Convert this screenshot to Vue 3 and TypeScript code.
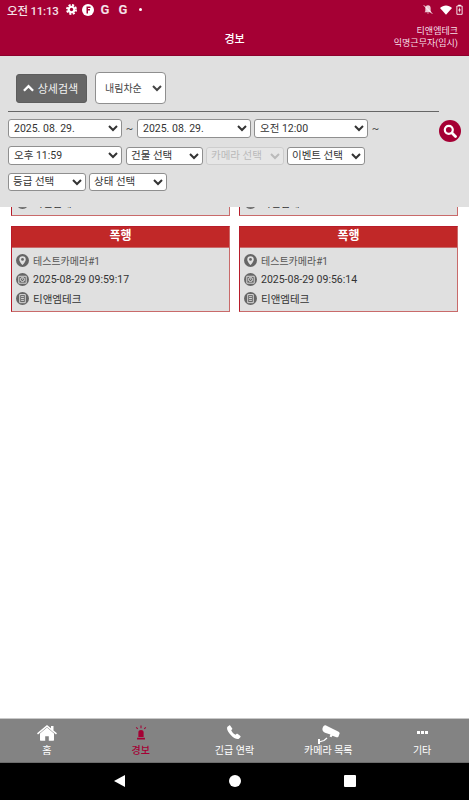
<script setup lang="ts">
interface Card { camera: string; time: string; site: string }
const cards: Card[] = [
  { camera: '테스트카메라#1', time: '2025-08-29 10:00:00', site: '티앤엠테크' },
  { camera: '테스트카메라#1', time: '2025-08-29 09:59:50', site: '티앤엠테크' },
  { camera: '테스트카메라#1', time: '2025-08-29 09:59:17', site: '티앤엠테크' },
  { camera: '테스트카메라#1', time: '2025-08-29 09:56:14', site: '티앤엠테크' },
]
</script>

<template>
  <div class="page">
    <header class="top">
      <div class="status">
        <span class="clock">오전 11:13</span>
        <svg class="gear" viewBox="0 0 12 12" width="11" height="11"><circle cx="6" cy="6" r="4.200" fill="#fff"/><circle cx="6" cy="6" r="5" fill="none" stroke="#fff" stroke-width="2" stroke-dasharray="2.300 1.630"/><circle cx="6" cy="6" r="1.800" fill="#a50034"/></svg>
        <svg class="fi" viewBox="0 0 12 12" width="12" height="12"><circle cx="6" cy="6" r="6" fill="#fff"/><path fill="#a50034" d="M4.500 2.500h4v1.500H6v1h2v1.400H6v3H4.500z"/></svg>
        <span class="g g1">G</span>
        <span class="g g2">G</span>
        <i class="dot"></i>
        <span class="grow"></span>
        <svg class="bell" viewBox="0 0 12 12" width="10" height="11"><path fill="#fff" opacity=".8" d="M6 1c2 0 3.200 1.500 3.200 3.400V8l1 1.200H1.800L2.800 8V4.400C2.800 2.500 4 1 6 1zM5 10h2l-1 1.300z"/><path stroke="#fff" stroke-width="1.200" d="M1 1l10 10"/></svg>
        <svg class="wifi" viewBox="0 0 14 11" width="12" height="10"><path fill="#fff" d="M0 3.300C3.800-.9 10.200-.9 14 3.300L7 11z"/></svg>
        <svg class="batt" viewBox="0 0 8 12" width="7" height="11"><path fill="none" stroke="#fff" d="M1 2h6v9.500H1z"/><path fill="#fff" d="M2.500.5h3V2h-3zM4.500 3L2.500 7h1.300l-.4 3 2.200-4H4.300z"/></svg>
      </div>
      <div class="titlebar">
        <span class="title">경보</span>
        <span class="user">티앤엠테크<br />익명근무자(임시)</span>
      </div>
    </header>

    <main class="main">
      <div class="list">
        <article v-for="c in cards" :key="c.time" class="card">
          <h3 class="card-title">폭행</h3>
          <div class="card-body">
            <div class="row">
              <svg class="ri" viewBox="0 0 14 14"><circle cx="7" cy="7" r="7" fill="#666"/><path fill="#e0e0e0" d="M7 2.300a3.500 3.500 0 0 0-3.500 3.500C3.500 8.300 7 11.800 7 11.800s3.500-3.500 3.500-6A3.500 3.500 0 0 0 7 2.300z"/><circle cx="7" cy="5.800" r="1.500" fill="#666"/></svg>
              <span class="muted">{{ c.camera }}</span>
            </div>
            <div class="row">
              <svg class="ri" viewBox="0 0 14 14"><circle cx="7" cy="7" r="7" fill="#666"/><path fill="none" stroke="#e0e0e0" d="M3 3.500h8v7.500H3z"/><circle cx="7" cy="7" r="2.200" fill="none" stroke="#e0e0e0"/><path stroke="#e0e0e0" d="M7 5.800V7l.9.600"/></svg>
              <span>{{ c.time }}</span>
            </div>
            <div class="row">
              <svg class="ri" viewBox="0 0 14 14"><circle cx="7" cy="7" r="7" fill="#666"/><path fill="none" stroke="#e0e0e0" d="M4 2.800h6v8.700H4z"/><path stroke="#e0e0e0" d="M5.500 5h3M5.500 7h3M5.500 9h3"/></svg>
              <span>{{ c.site }}</span>
            </div>
          </div>
        </article>
      </div>

      <section class="panel">
        <div class="panel-top">
          <button class="detail" type="button">
            <svg viewBox="0 0 12 8" width="11" height="8"><path fill="none" stroke="#fff" stroke-width="2.600" d="M1 7l5-5 5 5"/></svg>
            상세검색
          </button>
          <select class="sort"><option>내림차순</option></select>
        </div>
        <div class="rule"></div>
        <div class="filters">
          <div class="fields">
            <select class="f wide"><option>2025. 08. 29.</option></select>
            <span class="til">~</span>
            <select class="f wide"><option>2025. 08. 29.</option></select>
            <select class="f wide up"><option>오전 12:00</option></select>
            <span class="til">~</span>
            <select class="f wide"><option>오후 11:59</option></select>
            <select class="f narrow first"><option>건물 선택</option></select>
            <select class="f narrow off" disabled><option>카메라 선택</option></select>
            <select class="f narrow"><option>이벤트 선택</option></select>
            <select class="f narrow"><option>등급 선택</option></select>
            <select class="f narrow"><option>상태 선택</option></select>
          </div>
          <button class="search" type="button" aria-label="검색">
            <svg viewBox="0 0 14 14" width="14" height="14"><circle cx="5.800" cy="5.800" r="4" fill="none" stroke="#fff" stroke-width="2.200"/><path stroke="#fff" stroke-width="2.800" stroke-linecap="round" d="M9 9l3.500 3.500"/></svg>
          </button>
        </div>
      </section>
    </main>

    <nav class="nav">
      <div class="tab">
        <div class="ico"><svg viewBox="0 0 20 16" width="20" height="16"><path fill="#fff" d="M10 2.600l7 5.800V15a.7.7 0 0 1-.7.700h-4.500v-4.500H8.200v4.500H3.700A.7.700 0 0 1 3 15V8.400z"/><path fill="#fff" d="M10 0l4 3.300V1h2.500v4.400L20 8.300l-1 1.200-9-7.400-9 7.400-1-1.200z"/></svg></div>
        <span>홈</span>
      </div>
      <div class="tab on">
        <div class="ico"><svg viewBox="0 0 16 17" width="14" height="16"><path fill="#a50034" d="M5 7.500C5 6 6.300 5 8 5s3 1 3 2.500V13H5zM3.500 14h9v2h-9z"/><path stroke="#a50034" stroke-width="1.200" d="M8 0v3M2.500 2l1.800 1.800M13.500 2l-1.800 1.800"/></svg></div>
        <span>경보</span>
      </div>
      <div class="tab">
        <div class="ico"><svg viewBox="0 0 16 16" width="14" height="14"><path fill="#fff" d="M3.600.6L6 3.900c.2.300.2.700-.1 1L4.800 6c.8 2 2.900 4.300 5 5.200l1.200-1.100c.3-.3.700-.3 1-.1l3.300 2.500c.4.300.4.800.1 1.100-.7.900-1.800 2.400-3.100 2.400C7.500 16 0 8.300 0 3.400 0 2.200 1.500 1.200 2.500.5c.4-.2.800-.2 1.100.1z"/></svg></div>
        <span>긴급 연락</span>
      </div>
      <div class="tab">
        <div class="ico cam"><svg viewBox="0 0 23 19" width="23" height="19"><path fill="#fff" d="M9 .4l12.600 6.300c.9.500 1.300 1.300.9 2.100l-1 2.600c-.4.900-1.200 1.200-2.100.8l-4-1.500-1 1.600-1.800-.9.800-1.800L8 7.800C5.800 6.800 5 5 5.600 3 6.200 1 7.500-.3 9 .4z"/><path fill="none" stroke="#fff" stroke-width="1.300" d="M2 17l5-1.500 3-2.500"/><path fill="#fff" d="M1 14h2v5H1z"/></svg></div>
        <span>카메라 목록</span>
      </div>
      <div class="tab">
        <div class="ico"><div class="dots"><i></i><i></i><i></i></div></div>
        <span>기타</span>
      </div>
    </nav>

    <div class="sysnav">
      <span class="back"></span>
      <span class="home"></span>
      <span class="recent"></span>
    </div>
  </div>
</template>

<style scoped>
.page {
  width: 469px;
  height: 800px;
  display: flex;
  flex-direction: column;
  overflow: hidden;
  background: #fff;
  font-family: "Roboto", "Noto Sans CJK KR", sans-serif;
  color: #333;
}
.top {
  height: 56px;
  flex: none;
  background: #a50034;
  color: #fff;
  border-bottom: 1px solid #8d002c;
  box-sizing: border-box;
}
.status {
  height: 19px;
  display: flex;
  align-items: center;
  padding: 0 6px 0 7px;
}
.clock { font-size: 11.500px; font-weight: 500; width: 59px; white-space: nowrap; color: #f3e0e6; letter-spacing: -.2px; }
.fi { margin-left: 5px; }
.g { font-size: 13px; font-weight: 700; width: 10px; text-align: center; color: #f3e0e6; }
.g1 { margin-left: 6px; }
.g2 { margin-left: 8px; }
.dot { width: 3px; height: 3px; border-radius: 50%; background: #fff; margin-left: 11px; }
.grow { flex: 1; }
.bell { margin-right: 7px; }
.wifi { margin-right: 4px; }
.batt { margin-right: 0; }
.titlebar {
  height: 36px;
  position: relative;
  display: flex;
  align-items: center;
  justify-content: center;
}
.title { font-size: 11px; font-weight: 500; margin-top: 1px; }
.user {
  position: absolute;
  right: 11px;
  top: 6px;
  font-size: 9px;
  line-height: 12px;
  text-align: right;
  color: #f5dfe6;
  white-space: nowrap;
}
.main {
  flex: 1;
  position: relative;
  overflow: hidden;
  min-height: 0;
}
.panel {
  position: absolute;
  top: 0;
  left: 0;
  right: 0;
  height: 151px;
  background: #e0e0e0;
  box-sizing: border-box;
  padding: 16px 8px 0;
}
.panel-top {
  display: flex;
  align-items: center;
  gap: 8px;
  padding-left: 8px;
  height: 32px;
}
.detail {
  width: 71px;
  height: 29px;
  background: #666;
  border: 1px solid #5d5d5d;
  border-radius: 3px;
  color: #f2f2f2;
  font: 400 11px "Roboto", "Noto Sans CJK KR", sans-serif;
  display: flex;
  align-items: center;
  justify-content: center;
  gap: 4px;
  padding: 0 2px 0 0;
}
.sort {
  width: 71px;
  height: 32px;
  background: #fff;
  border: 1px solid #8f8f8f;
  border-radius: 4px;
  font: 10px "Roboto", "Noto Sans CJK KR", sans-serif;
  color: #444;
  padding-left: 5px;
}
.rule {
  width: 431px;
  height: 1px;
  background: #666;
  margin-top: 7px;
}
.filters {
  display: flex;
  justify-content: space-between;
  margin-top: 7px;
}
.fields {
  width: 372px;
  display: flex;
  flex-wrap: wrap;
  align-items: center;
  gap: 8px 3px;
}
.f {
  box-sizing: border-box;
  background: #fff;
  border: 1px solid #8f8f8f;
  border-radius: 3px;
  font: 10.500px "Roboto", "Noto Sans CJK KR", sans-serif;
  color: #333;
  padding: 0;
}
.wide { width: 114px; height: 19px; padding-left: 1px; }
.up { margin-top: -1px; }
.narrow { width: 78px; height: 18px; padding-bottom: 2px; margin-bottom: -1px; }
.first { margin-left: 1px; width: 77px; }
.off { color: #aaa; border-color: #c6c6c6; background: #e9e9e9; }
.til { font-size: 11px; width: 9px; text-align: center; color: #444; }
.search {
  width: 22px;
  height: 22px;
  border-radius: 50%;
  border: 0;
  background: #a50034;
  display: flex;
  align-items: center;
  justify-content: center;
  padding: 0;
  margin: 1px 0 0 0;
}
.list {
  display: grid;
  grid-template-columns: 219px 219px;
  gap: 10px 9px;
  padding: 0 11px;
  margin-top: 74px;
}
.card {
  height: 86px;
  box-sizing: border-box;
  border: 1px solid #c96a6a;
  border-top-color: #b71c2a;
  border-left-color: #b71c2a;
  background: #e0e0e0;
}
.card-title {
  margin: 0;
  height: 21px;
  background: #c12828;
  color: #fff;
  font-size: 12px;
  line-height: 19px;
  font-weight: 700;
  text-align: center;
  border-bottom: 1px solid #c96a6a;
  box-sizing: border-box;
}
.card-body {
  padding: 5px 4px 0;
  display: flex;
  flex-direction: column;
  gap: 5px;
}
.row {
  height: 14px;
  display: flex;
  align-items: center;
  gap: 4px;
  font-size: 10.500px;
  color: #333;
}
.ri { width: 13px; height: 13px; flex: none; }
.muted { color: #555; font-size: 10px; }
.nav {
  height: 45px;
  flex: none;
  display: grid;
  grid-template-columns: repeat(5, 1fr);
  background: #838383;
  border-top: 1px solid #c8c8c8;
  border-bottom: 1px solid #6c6c6c;
  box-sizing: border-box;
}
.tab {
  display: flex;
  flex-direction: column;
  align-items: center;
  padding-top: 6px;
  color: #fff;
  font-size: 10px;
  line-height: 12px;
}
.ico {
  height: 20px;
  display: flex;
  align-items: flex-start;
  justify-content: center;
}
.tab.on { color: #a50034; font-weight: 500; }
.dots { display: flex; gap: 1px; margin-top: 6px; }
.dots i { width: 3px; height: 3px; background: #fff; }
.sysnav {
  height: 37px;
  flex: none;
  background: #000;
  display: grid;
  grid-template-columns: 1fr 1fr 1fr;
  padding: 0 62px 2px;
  align-items: center;
  justify-items: center;
  box-sizing: border-box;
}
.back {
  width: 0;
  height: 0;
  border-top: 6.500px solid transparent;
  border-bottom: 6.500px solid transparent;
  border-right: 11px solid #fff;
}
.home { width: 12px; height: 12px; border-radius: 50%; background: #fff; }
.recent { width: 12px; height: 12px; border-radius: 1px; background: #fff; }
</style>

<style>
html, body { margin: 0; background: #fff; }
</style>
